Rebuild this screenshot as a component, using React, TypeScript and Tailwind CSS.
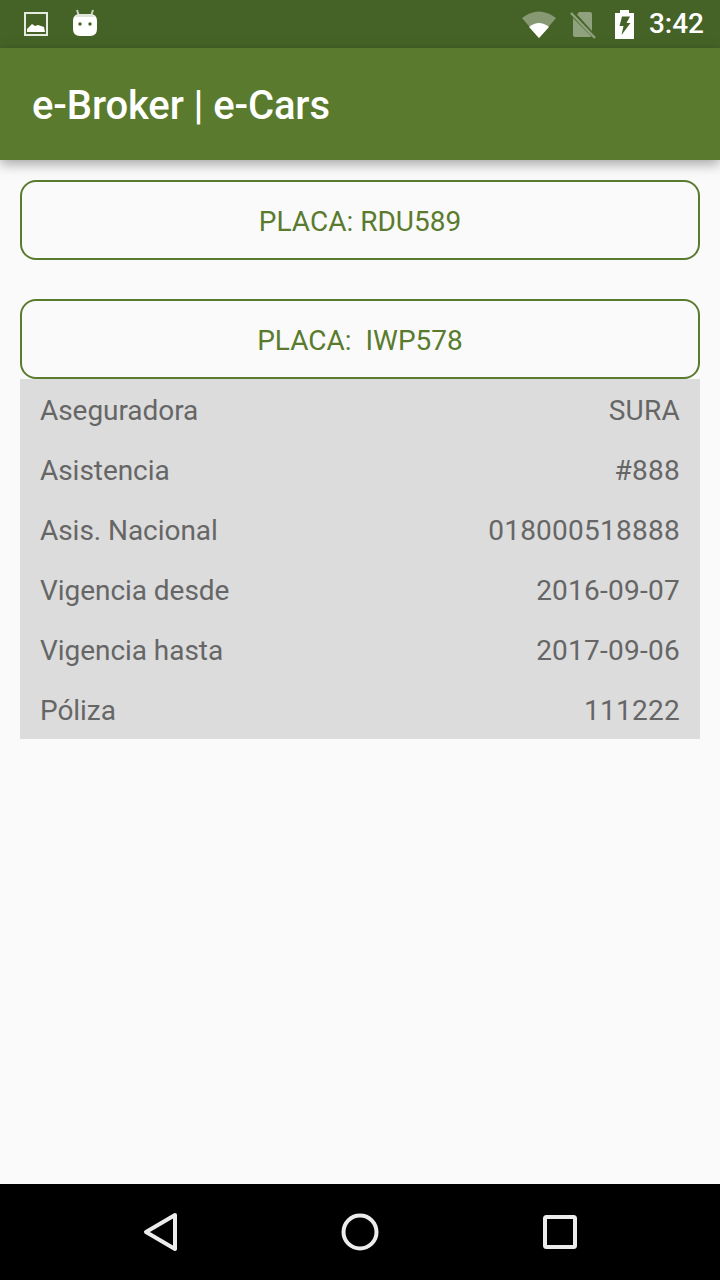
const rows: [string, string][] = [
  ["Aseguradora", "SURA"],
  ["Asistencia", "#888"],
  ["Asis. Nacional", "018000518888"],
  ["Vigencia desde", "2016-09-07"],
  ["Vigencia hasta", "2017-09-06"],
  ["Póliza", "111222"],
];

function PlateButton({ label }: { label: string }) {
  return (
    <div className="flex h-20 items-center justify-center whitespace-pre rounded-[16px] border-2 border-[#5a7b2e] bg-[#fafafa] pt-1 text-[28px] text-[#5a7b2e]">
      {label}
    </div>
  );
}

export default function App() {
  return (
    <div className="flex h-[1280px] w-[720px] flex-col overflow-hidden bg-[#fafafa] font-['Roboto',sans-serif]">
      <div className="flex h-12 shrink-0 items-center justify-between bg-[#466327] pl-6 pr-4">
        <div className="flex items-center gap-[25px]">
          <svg width="24" height="24" viewBox="0 0 24 24">
            <rect x="1" y="1" width="22" height="22" fill="none" stroke="#e6ebdf" strokeWidth="2" />
            <path d="M3 20 L3 17 L8 12 L11 14 L14 13 L20 15 L21 20 Z" fill="#ffffff" />
          </svg>
          <svg width="24" height="28" viewBox="0 0 24 28" className="-mt-[3px]">
            <path d="M6 7 L4 1 M18 7 L20 1" stroke="#c9d1bf" strokeWidth="2" />
            <path d="M0 12 Q0 5 7 5 L17 5 Q24 5 24 12 L24 20 Q24 27 17 27 L7 27 Q0 27 0 20 Z" fill="#ffffff" />
            <path d="M2 8 Q4 5 7 5 L17 5 Q20 5 22 8 Z" fill="#dfe3da" />
            <circle cx="7" cy="15" r="1.7" fill="#466327" />
            <circle cx="17" cy="15" r="1.7" fill="#466327" />
          </svg>
        </div>
        <div className="flex items-center">
          <svg width="34" height="28" viewBox="0 0 34 28" className="mr-[14px]">
            <path d="M0 8 Q17 -5 34 8 L17 28 Z" fill="#ffffff" fillOpacity="0.35" />
            <path d="M7 17 Q17 9 27 17 L17 28 Z" fill="#ffffff" />
          </svg>
          <svg width="26" height="27" viewBox="0 0 26 27" className="mr-[19px] mt-[2px]">
            <path d="M9 0 L20 0 Q22 0 22 2 L22 19 L7 2.5 Z" fill="#ffffff" fillOpacity="0.4" />
            <path d="M3 6 L3 23 Q3 25 5 25 L20 25 Q21 25 21 24 Z" fill="#ffffff" fillOpacity="0.4" />
            <path d="M1 1 L25 26" stroke="#ffffff" strokeOpacity="0.4" strokeWidth="2.5" />
          </svg>
          <svg width="19" height="29" viewBox="0 0 19 29" className="mr-[15px]">
            <path d="M5 0 H14 V3 H19 V29 H0 V3 H5 Z" fill="#ffffff" />
            <path d="M7 6.5 H15 L11.5 13 H15.5 L6.5 25 L8.5 16 H4.5 Z" fill="#466327" />
          </svg>
          <span className="text-[28px] font-medium leading-none text-white">3:42</span>
        </div>
      </div>

      <div className="relative z-10 flex h-[112px] shrink-0 items-center bg-[#5a7b2e] pl-8 pt-1 shadow-[0_4px_12px_rgba(0,0,0,0.35)]">
        <span className="text-[40px] font-medium leading-none tracking-[-0.12px] text-white">e-Broker | e-Cars</span>
      </div>

      <div className="flex flex-1 flex-col px-5 pt-5">
        <PlateButton label="PLACA: RDU589" />
        <div className="mt-[39px]">
          <PlateButton label="PLACA:  IWP578" />
        </div>
        <div className="bg-[#dcdcdc]">
          {rows.map(([k, v]) => (
            <div key={k} className="flex h-[60px] items-center justify-between px-5 pt-1 text-[28px] text-[#666666]">
              <span className="tracking-[-0.05px]">{k}</span>
              <span className="tracking-[0.25px]">{v}</span>
            </div>
          ))}
        </div>
      </div>

      <div className="flex h-24 shrink-0 items-center justify-between bg-black pl-[143px] pr-[143px]">
        <svg width="36" height="40" viewBox="0 0 36 40">
          <path d="M32 3 L3 20 L32 37 Z" fill="none" stroke="#ececec" strokeWidth="4" strokeLinejoin="round" />
        </svg>
        <svg width="38" height="38" viewBox="0 0 38 38" className="-ml-[2px]">
          <circle cx="19" cy="19" r="16.5" fill="none" stroke="#ececec" strokeWidth="4" />
        </svg>
        <svg width="34" height="34" viewBox="0 0 34 34">
          <rect x="2" y="2" width="30" height="30" rx="1.5" fill="none" stroke="#ececec" strokeWidth="4" />
        </svg>
      </div>
    </div>
  );
}
